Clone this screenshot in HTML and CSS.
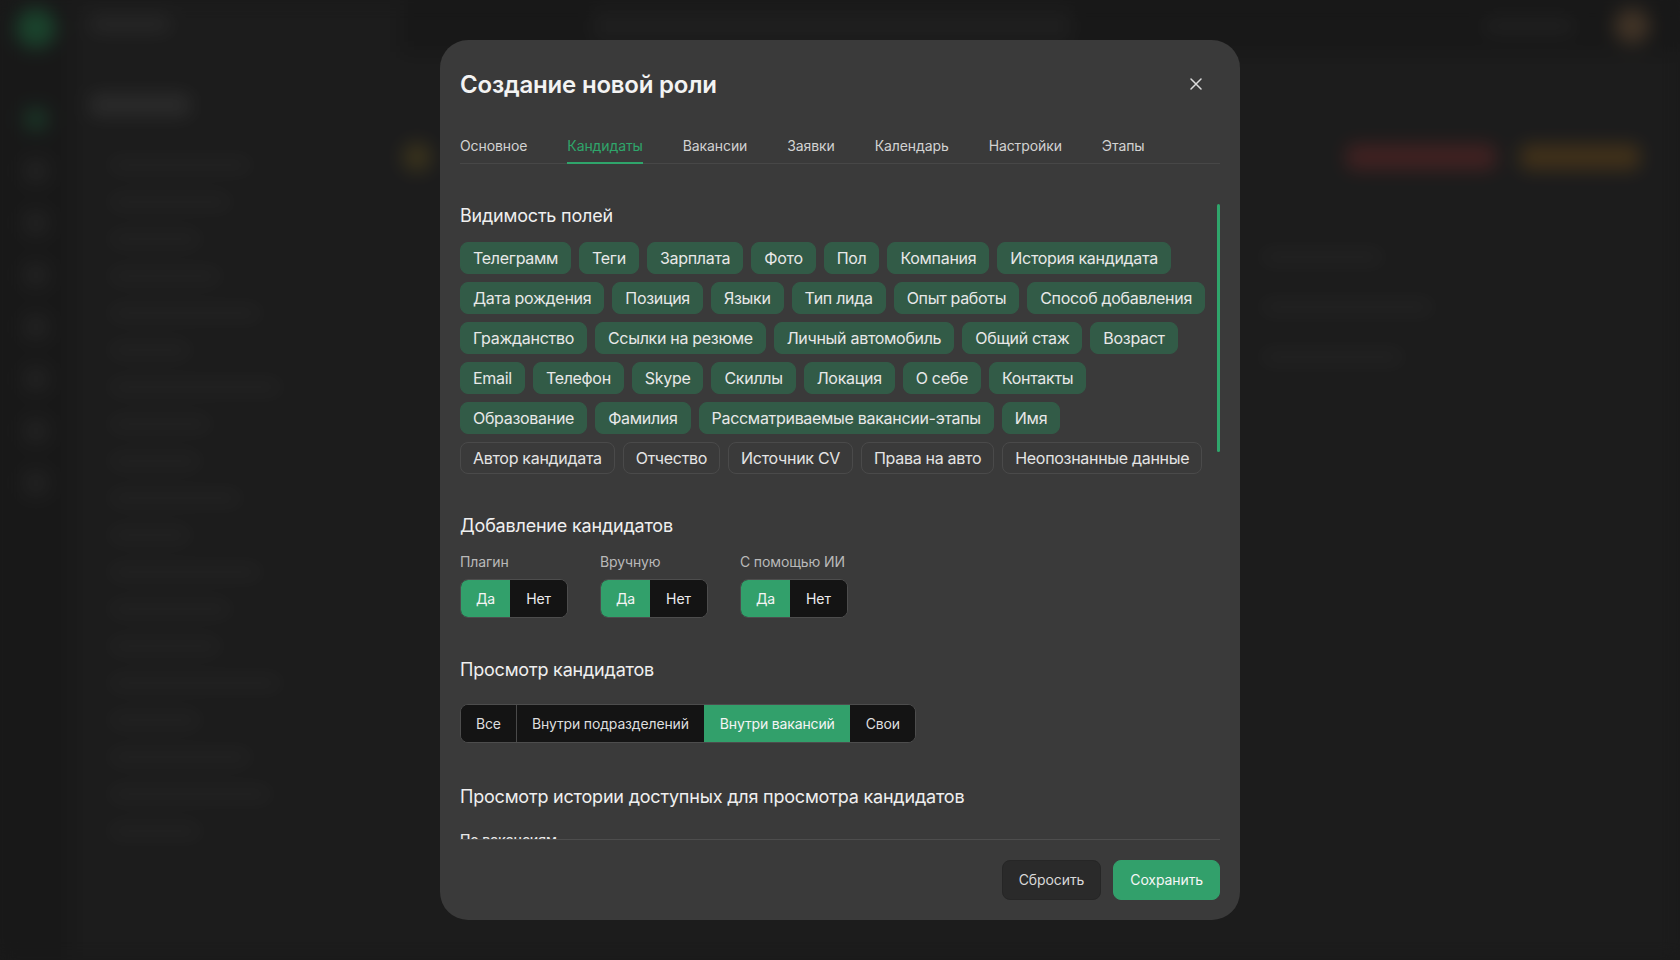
FILE: index.html
```html
<!DOCTYPE html>
<html lang="ru">
<head>
<meta charset="utf-8">
<title>Создание новой роли</title>
<link rel="stylesheet" href="styles.css">
</head>
<body>
<div class="app" aria-hidden="true">
  <aside class="rail">
    <div class="rail-logo"></div>
    <div class="rail-icon rail-icon--on"></div>
    <div class="rail-icon"></div>
    <div class="rail-icon"></div>
    <div class="rail-icon"></div>
    <div class="rail-icon"></div>
    <div class="rail-icon"></div>
    <div class="rail-icon"></div>
    <div class="rail-icon"></div>
  </aside>
  <div class="side">
    <div class="brand"></div>
    <div class="side-title"></div>
    <div class="side-list">
      <div class="bar w140"></div><div class="bar w120"></div><div class="bar w90"></div>
      <div class="bar w110"></div><div class="bar w150"></div><div class="bar w80"></div>
      <div class="bar w170"></div><div class="bar w100"></div><div class="bar w90"></div>
      <div class="bar w130"></div><div class="bar w80"></div><div class="bar w150"></div>
      <div class="bar w120"></div><div class="bar w110"></div><div class="bar w170"></div>
      <div class="bar w90"></div><div class="bar w140"></div><div class="bar w160"></div>
      <div class="bar w90"></div>
    </div>
  </div>
  <div class="main">
    <div class="topbar">
      <div class="search"></div>
      <div class="top-right"><div class="bar w90"></div><div class="avatar"></div></div>
    </div>
    <div class="main-head">
      <div class="pin"></div>
      <div class="main-actions"><div class="btn-red"></div><div class="btn-orange"></div></div>
    </div>
    <div class="main-rows">
      <div class="bar w120"></div><div class="bar w170"></div><div class="bar w140"></div>
    </div>
  </div>
</div>

<div class="overlay">
  <section class="modal" role="dialog" aria-labelledby="modal-title">
    <header class="modal-head">
      <h2 class="modal-title" id="modal-title">Создание новой роли</h2>
      <button class="close-btn" type="button" aria-label="Закрыть">
        <svg width="12" height="12" viewBox="0 0 12 12" fill="none"><path d="M1 1L11 11M11 1L1 11" stroke="#dcdcdc" stroke-width="1.5" stroke-linecap="round"/></svg>
      </button>
    </header>

    <nav class="tabs">
      <span class="tab">Основное</span>
      <span class="tab tab--active">Кандидаты</span>
      <span class="tab">Вакансии</span>
      <span class="tab">Заявки</span>
      <span class="tab">Календарь</span>
      <span class="tab">Настройки</span>
      <span class="tab">Этапы</span>
    </nav>

    <div class="modal-body">
      <div class="body-scroll">
        <section class="block">
          <h3 class="block-title block-title--compact">Видимость полей</h3>
          <div class="chips">
            <span class="chip chip--on">Телеграмм</span>
            <span class="chip chip--on">Теги</span>
            <span class="chip chip--on">Зарплата</span>
            <span class="chip chip--on">Фото</span>
            <span class="chip chip--on">Пол</span>
            <span class="chip chip--on">Компания</span>
            <span class="chip chip--on">История кандидата</span>
            <span class="chip chip--on">Дата рождения</span>
            <span class="chip chip--on">Позиция</span>
            <span class="chip chip--on">Языки</span>
            <span class="chip chip--on">Тип лида</span>
            <span class="chip chip--on">Опыт работы</span>
            <span class="chip chip--on">Способ добавления</span>
            <span class="chip chip--on">Гражданство</span>
            <span class="chip chip--on">Ссылки на резюме</span>
            <span class="chip chip--on">Личный автомобиль</span>
            <span class="chip chip--on">Общий стаж</span>
            <span class="chip chip--on">Возраст</span>
            <span class="chip chip--on">Email</span>
            <span class="chip chip--on">Телефон</span>
            <span class="chip chip--on">Skype</span>
            <span class="chip chip--on">Скиллы</span>
            <span class="chip chip--on">Локация</span>
            <span class="chip chip--on">О себе</span>
            <span class="chip chip--on">Контакты</span>
            <span class="chip chip--on">Образование</span>
            <span class="chip chip--on">Фамилия</span>
            <span class="chip chip--on">Рассматриваемые вакансии-этапы</span>
            <span class="chip chip--on">Имя</span>
            <span class="chip">Автор кандидата</span>
            <span class="chip">Отчество</span>
            <span class="chip">Источник CV</span>
            <span class="chip">Права на авто</span>
            <span class="chip">Неопознанные данные</span>
          </div>
        </section>

        <section class="block">
          <h3 class="block-title block-title--compact">Добавление кандидатов</h3>
          <div class="switch-row">
            <div class="switch-field">
              <div class="field-label">Плагин</div>
              <div class="toggle"><button class="toggle-opt toggle-opt--on" type="button">Да</button><button class="toggle-opt" type="button">Нет</button></div>
            </div>
            <div class="switch-field">
              <div class="field-label">Вручную</div>
              <div class="toggle"><button class="toggle-opt toggle-opt--on" type="button">Да</button><button class="toggle-opt" type="button">Нет</button></div>
            </div>
            <div class="switch-field">
              <div class="field-label">С помощью ИИ</div>
              <div class="toggle"><button class="toggle-opt toggle-opt--on" type="button">Да</button><button class="toggle-opt" type="button">Нет</button></div>
            </div>
          </div>
        </section>

        <section class="block">
          <h3 class="block-title">Просмотр кандидатов</h3>
          <div class="segmented">
            <button class="seg" type="button">Все</button>
            <button class="seg" type="button">Внутри подразделений</button>
            <button class="seg seg--on" type="button">Внутри вакансий</button>
            <button class="seg" type="button">Свои</button>
          </div>
        </section>

        <section class="block block--history">
          <h3 class="block-title block-title--history">Просмотр истории доступных для просмотра кандидатов</h3>
          <div class="field-label field-label--strong">По вакансиям</div>
        </section>
      </div>
      <div class="scroll-rail" aria-hidden="true"><div class="scroll-thumb"></div></div>
    </div>

    <footer class="modal-foot">
      <button class="btn btn--ghost" type="button">Сбросить</button>
      <button class="btn btn--primary" type="button">Сохранить</button>
    </footer>
  </section>
</div>
</body>
</html>
```

FILE: styles.css
```css
* { box-sizing: border-box; }

html, body {
  margin: 0;
  padding: 0;
}

body {
  background: #1f1f1f;
  font-family: Inter, "Noto Sans", "Liberation Sans", sans-serif;
  color: #e8e8e8;
  overflow: hidden;
}

/* ---------- blurred background app ---------- */
.app {
  display: flex;
  height: 960px;
  background: #222222;
  filter: blur(9px);
}

.rail {
  width: 72px;
  flex: none;
  background: #1d1d1d;
  display: flex;
  flex-direction: column;
  align-items: center;
  gap: 30px;
  padding-top: 8px;
}
.rail-logo {
  width: 40px; height: 40px;
  border-radius: 50%;
  background: #1f5d3b;
  margin-bottom: 30px;
}
.rail-icon {
  width: 22px; height: 22px;
  border-radius: 6px;
  background: #2d2d2d;
}
.rail-icon--on { background: #1f4a33; }

.side {
  width: 330px;
  flex: none;
  padding: 16px 20px 0 18px;
  display: flex;
  flex-direction: column;
}
.brand {
  width: 80px; height: 16px;
  background: #333;
  border-radius: 6px;
  margin-bottom: 62px;
}
.side-title {
  width: 100px; height: 22px;
  background: #3a3a3a;
  border-radius: 6px;
  margin-bottom: 44px;
}
.side-list {
  display: flex;
  flex-direction: column;
  gap: 27px;
  padding-left: 20px;
}
.bar {
  height: 10px;
  border-radius: 5px;
  background: #2f2f2f;
}
.w80 { width: 80px; } .w90 { width: 90px; } .w100 { width: 100px; }
.w110 { width: 110px; } .w120 { width: 120px; } .w130 { width: 130px; }
.w140 { width: 140px; } .w150 { width: 150px; } .w160 { width: 160px; }
.w170 { width: 170px; }

.main {
  flex: 1;
  display: flex;
  flex-direction: column;
}
.topbar {
  height: 52px;
  background: #1c1c1c;
  display: flex;
  align-items: center;
  justify-content: space-between;
  padding: 0 30px 0 190px;
}
.search {
  width: 480px; height: 30px;
  border-radius: 8px;
  background: #262626;
}
.top-right { display: flex; align-items: center; gap: 40px; }
.avatar {
  width: 36px; height: 36px;
  border-radius: 50%;
  background: #5a4632;
}
.main-head {
  display: flex;
  align-items: center;
  justify-content: space-between;
  padding: 90px 40px 0 0;
}
.pin {
  width: 30px; height: 30px;
  border-radius: 50%;
  background: #4e4422;
}
.main-actions { display: flex; gap: 24px; }
.btn-red {
  width: 150px; height: 26px;
  border-radius: 8px;
  background: #5a2a2a;
}
.btn-orange {
  width: 120px; height: 26px;
  border-radius: 8px;
  background: #5a4220;
}
.main-rows {
  display: flex;
  flex-direction: column;
  gap: 40px;
  padding: 80px 0 0 860px;
}

/* ---------- overlay & modal ---------- */
.overlay {
  position: fixed;
  inset: 0;
  background: rgba(18, 18, 18, 0.35);
  display: flex;
  justify-content: center;
  align-items: flex-start;
  padding-top: 40px;
}

.modal {
  width: 800px;
  height: 880px;
  padding: 20px;
  background: #3a3a3a;
  border-radius: 28px;
  display: flex;
  flex-direction: column;
}

.modal-head {
  display: flex;
  align-items: center;
  justify-content: space-between;
  height: 48px;
}
.modal-title {
  margin: 0;
  font-size: 24px;
  line-height: 30px;
  font-weight: 600;
  color: #f3f3f3;
  letter-spacing: -0.2px;
  padding-top: 2px;
}
.close-btn {
  width: 48px; height: 48px;
  border: 0;
  padding: 0;
  background: transparent;
  display: flex;
  align-items: center;
  justify-content: center;
  cursor: pointer;
}

.tabs {
  margin-top: 28px;
  display: flex;
  gap: 40px;
  border-bottom: 1px solid #474747;
}
.tab {
  font-size: 14px;
  line-height: 20px;
  color: #d2d2d2;
  letter-spacing: -0.1px;
  padding-bottom: 6px;
  border-bottom: 2px solid transparent;
  margin-bottom: -1px;
}
.tab--active {
  color: #2fa56b;
  border-bottom-color: #2fa56b;
}

.modal-body {
  flex: 1;
  min-height: 0;
  margin-top: 40px;
  display: flex;
  gap: 6px;
}
.body-scroll {
  flex: 1;
  min-width: 0;
  overflow-y: auto;
  scrollbar-width: none;
}
.scroll-rail {
  width: 3px;
  flex: none;
}
.scroll-thumb {
  height: 248px;
  border-radius: 2px;
  background: #2fa56b;
}

.block + .block { margin-top: 40px; }
.block + .block--history { margin-top: 42px; }

.block-title {
  margin: 0 0 22px;
  font-size: 18px;
  line-height: 24px;
  font-weight: 400;
  color: #efefef;
  letter-spacing: -0.2px;
}
.block-title--compact { margin-bottom: 14px; }
.block-title--history { margin-bottom: 21px; }

/* chips */
.chips {
  display: flex;
  flex-wrap: wrap;
  gap: 8px;
}
.chip {
  height: 32px;
  padding: 0 12px;
  border: 1px solid #4a4a4a;
  border-radius: 8px;
  font-size: 16px;
  line-height: 30px;
  letter-spacing: -0.3px;
  color: #e4e4e4;
  white-space: nowrap;
}
.chip--on {
  background: #325b47;
  border-color: #325b47;
  color: #e8e8e8;
}

/* yes/no switches */
.switch-row {
  display: flex;
  gap: 32px;
}
.field-label {
  font-size: 14px;
  line-height: 20px;
  color: #b9b9b9;
  letter-spacing: -0.1px;
  margin-bottom: 7px;
}
.field-label--strong {
  color: #e6e6e6;
  font-weight: 500;
}
.toggle {
  display: flex;
  width: max-content;
  height: 39px;
  border: 1px solid #4d4d4d;
  border-radius: 8px;
  overflow: hidden;
  background: #141414;
}
.toggle-opt {
  border: 0;
  margin: 0;
  padding: 0 15px;
  background: #141414;
  color: #ececec;
  font: inherit;
  font-size: 14px;
  line-height: 37px;
  letter-spacing: -0.1px;
}
.toggle-opt--on { background: #32a06b; color: #f4f4f4; }
.toggle-opt + .toggle-opt { padding: 0 16px; }

/* segmented */
.segmented {
  display: flex;
  width: max-content;
  height: 39px;
  border: 1px solid #4d4d4d;
  border-radius: 8px;
  overflow: hidden;
  background: #141414;
}
.seg {
  border: 0;
  border-left: 1px solid #4a4a4a;
  margin: 0;
  padding: 0 15px;
  background: #141414;
  color: #dedede;
  font: inherit;
  font-size: 14px;
  line-height: 37px;
  letter-spacing: -0.15px;
}
.seg:first-child { border-left: 0; }
.seg--on { background: #32a06b; border-left-color: #32a06b; color: #f4f4f4; }
.seg--on + .seg { border-left-color: #141414; }

/* footer */
.modal-foot {
  border-top: 1px solid #4d4d4d;
  padding-top: 20px;
  display: flex;
  justify-content: flex-end;
  gap: 12px;
}
.btn {
  height: 40px;
  padding: 0 16px;
  border-radius: 8px;
  font: inherit;
  font-size: 14px;
  line-height: 38px;
  letter-spacing: -0.1px;
  cursor: pointer;
}
.btn--ghost {
  background: #2a2a2a;
  border: 1px solid #262626;
  color: #d8d8d8;
}
.btn--primary {
  background: #32a06b;
  border: 1px solid #32a06b;
  color: #f6f6f6;
}
```
